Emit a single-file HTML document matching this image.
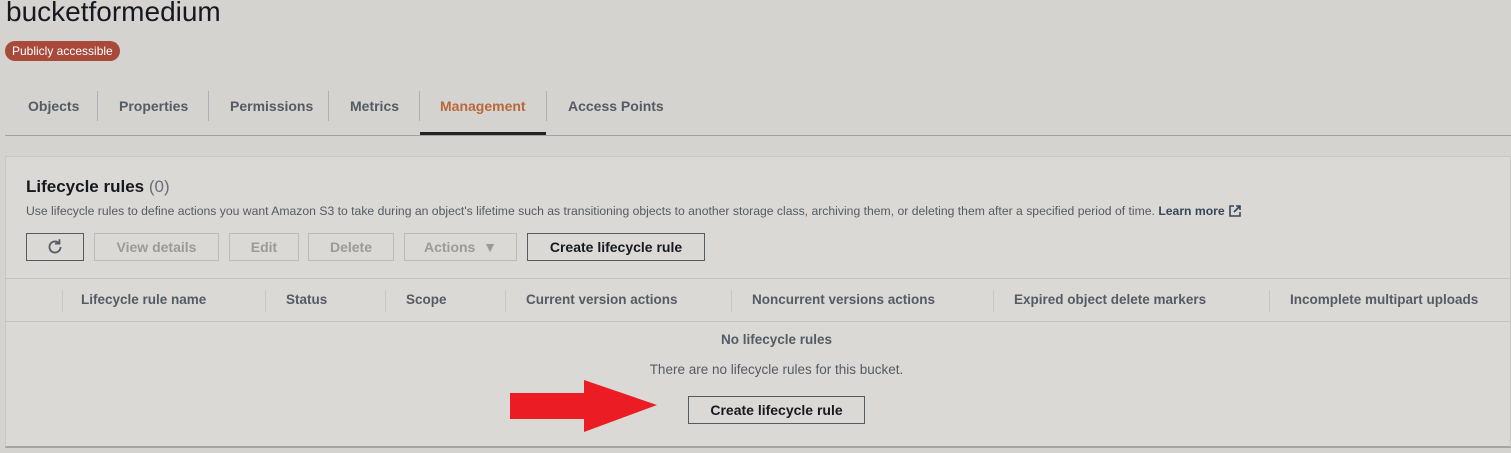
<!DOCTYPE html>
<html><head><style>
body{margin:0;width:1511px;height:453px;background:#d5d3cf;font-family:"Liberation Sans",sans-serif;position:relative;overflow:hidden;color:#16191f}
.a{position:absolute;white-space:nowrap}
.tab{position:absolute;top:98px;font-size:14px;font-weight:bold;color:#545b64}
.sep{position:absolute;top:91px;width:1px;height:30px;background:#aab0b5}
.btn{position:absolute;top:233px;height:28px;box-sizing:border-box;border:1px solid #bbb;color:#9a9a9a;font-size:14px;font-weight:bold;text-align:center;line-height:26px}
.th{position:absolute;top:292px;font-size:13.5px;font-weight:bold;color:#545b64}
.ts{position:absolute;top:290px;width:1px;height:22px;background:#c8c6c2}
</style></head><body>
<div class="a" style="left:6px;top:-4px;font-size:28px;color:#16191f">bucketformedium</div>
<div class="a" style="left:5px;top:41px;height:20px;padding:0 7px;border-radius:10px;background:#a9493a;color:#fff;font-size:12px;line-height:20px">Publicly accessible</div>
<div class="tab" style="left:28px">Objects</div><div class="sep" style="left:97px"></div>
<div class="tab" style="left:119px">Properties</div><div class="sep" style="left:208px"></div>
<div class="tab" style="left:230px">Permissions</div><div class="sep" style="left:328px"></div>
<div class="tab" style="left:350px">Metrics</div><div class="sep" style="left:419px"></div>
<div class="tab" style="left:440px;color:#b8683a">Management</div><div class="sep" style="left:546px"></div>
<div class="tab" style="left:568px">Access Points</div>
<div class="a" style="left:420px;top:132px;width:126px;height:3px;background:#232323"></div>
<div class="a" style="left:5px;top:135px;width:1506px;height:1px;background:#9ea3a8"></div>
<div class="a" style="left:5px;top:156px;width:1506px;height:292px;background:#dbd9d5;border:1px solid #c9c7c3;border-bottom:2px solid #a5a5a5;box-sizing:border-box"></div>
<div class="a" style="left:26px;top:177px;font-size:17px;font-weight:bold">Lifecycle rules <span style="font-weight:normal;color:#687078">(0)</span></div>
<div class="a" style="left:26px;top:204px;font-size:12.2px;color:#545b64">Use lifecycle rules to define actions you want Amazon S3 to take during an object's lifetime such as transitioning objects to another storage class, archiving them, or deleting them after a specified period of time. <b style="color:#37475a">Learn more</b> <svg width="14" height="14" viewBox="0 0 14 14" style="vertical-align:-3px"><path d="M6 2H2v10h10V8M8 2h4v4M12 2L6 8" fill="none" stroke="#37475a" stroke-width="1.6"/></svg></div>
<div class="btn" style="left:26px;width:58px;border-color:#545b64;color:#545b64"><svg width="20" height="20" viewBox="0 0 18 18" style="margin-top:3px"><path d="M14 9a5 5 0 1 1-1.5-3.6M13 2v4H9" fill="none" stroke="#545b64" stroke-width="1.6"/></svg></div>
<div class="btn" style="left:94px;width:125px">View details</div>
<div class="btn" style="left:229px;width:70px">Edit</div>
<div class="btn" style="left:308px;width:86px">Delete</div>
<div class="btn" style="left:404px;width:113px">Actions &nbsp;▼</div>
<div class="btn" style="left:527px;width:178px;border-color:#545b64;color:#16191f">Create lifecycle rule</div>
<div class="a" style="left:6px;top:278px;width:1505px;height:1px;background:#c5c3bf"></div>
<div class="th" style="left:81px">Lifecycle rule name</div><div class="ts" style="left:62px"></div><div class="ts" style="left:265px"></div>
<div class="th" style="left:286px">Status</div><div class="ts" style="left:385px"></div>
<div class="th" style="left:406px">Scope</div><div class="ts" style="left:505px"></div>
<div class="th" style="left:526px">Current version actions</div><div class="ts" style="left:731px"></div>
<div class="th" style="left:752px">Noncurrent versions actions</div><div class="ts" style="left:993px"></div>
<div class="th" style="left:1014px">Expired object delete markers</div><div class="ts" style="left:1269px"></div>
<div class="th" style="left:1290px">Incomplete multipart uploads</div>
<div class="a" style="left:6px;top:321px;width:1505px;height:1px;background:#c5c3bf"></div>
<div class="a" style="left:0;width:1553px;top:332px;text-align:center;font-size:13.5px;font-weight:bold;color:#545b64">No lifecycle rules</div>
<div class="a" style="left:0;width:1553px;top:362px;text-align:center;font-size:13.5px;color:#545b64">There are no lifecycle rules for this bucket.</div>
<div class="btn" style="left:688px;top:396px;width:177px;border-color:#545b64;color:#16191f">Create lifecycle rule</div>
<svg class="a" style="left:508px;top:378px" width="152" height="56"><path d="M2 15H76V2L149 27L76 54V41H2Z" fill="#ec1c24"/></svg>
</body></html>
